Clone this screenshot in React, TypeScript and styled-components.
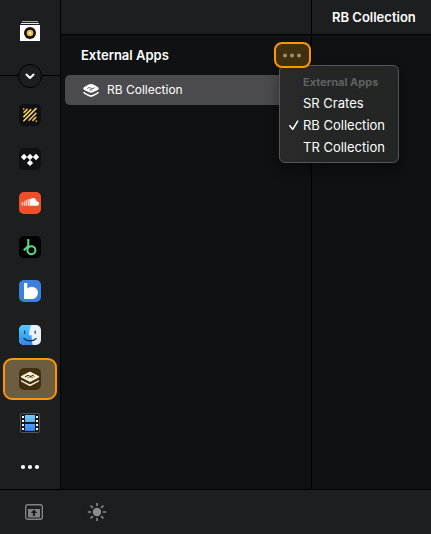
import React, { useState } from "react";
import styled, { createGlobalStyle, css } from "styled-components";

const GlobalStyle = createGlobalStyle`
  *, *::before, *::after { box-sizing: border-box; }
  body {
    margin: 0;
    background: #101113;
    color: #fff;
    font-family: Inter, "Liberation Sans", sans-serif;
    font-size: 13px;
    line-height: 16px;
    overflow: hidden;
  }
  button { font: inherit; color: inherit; border: 0; margin: 0; padding: 0; background: none; cursor: pointer; }
  svg { display: block; flex: none; }
  h1, h2, ul { margin: 0; padding: 0; font: inherit; list-style: none; }
`;

const Shell = styled.div`
  display: flex;
  flex-direction: column;
  min-height: 100vh;
`;

const Workspace = styled.div`
  display: flex;
  flex: 1;
`;

const Sidebar = styled.nav`
  display: flex;
  flex-direction: column;
  flex: none;
  width: 61px;
  background: #1d1e20;
  border-right: 1px solid #000;
`;

const LibrarySection = styled.div`
  position: relative;
  display: flex;
  justify-content: center;
  height: 76px;
  padding-top: 20px;
  border-bottom: 1px solid #000;
`;

const LibraryButton = styled.button`
  width: 22px;
  height: 22px;
`;

const CollapseButton = styled.button`
  position: absolute;
  left: 50%;
  bottom: -13px;
  display: grid;
  place-items: center;
  width: 24px;
  height: 24px;
  border: 1px solid #000;
  border-radius: 50%;
  background: #1d1e20;
  transform: translateX(-50%);
`;

const SourceList = styled.ul`
  display: flex;
  flex-direction: column;
  padding: 18px 3px 0;
  gap: 2px;
`;

const SourceButton = styled.button<{ $active?: boolean }>`
  display: grid;
  place-items: center;
  width: 100%;
  height: 42px;
  border-radius: 9px;
  ${({ $active }) =>
    $active &&
    css`
      border: 2px solid #ff9500;
      background: #6c5d40;
    `}
`;

const Browser = styled.section`
  display: flex;
  flex-direction: column;
  flex: none;
  width: 251px;
  border-right: 1px solid #000;
`;

const Content = styled.main`
  flex: 1;
  min-width: 0;
`;

const TitleBar = styled.header`
  display: flex;
  align-items: center;
  height: 35px;
  padding: 0 20px;
  background: #1d1e20;
  border-bottom: 1px solid #000;
`;

const Title = styled.h1`
  font-weight: 600;
  white-space: nowrap;
`;

const BrowserHeader = styled.div`
  display: flex;
  align-items: center;
  justify-content: space-between;
  height: 40px;
  padding-left: 20px;
`;

const BrowserTitle = styled.h2`
  font-weight: 600;
`;

const MenuAnchor = styled.div`
  position: relative;
`;

const MoreButton = styled.button`
  position: relative;
  z-index: 2;
  display: grid;
  place-items: center;
  width: 37px;
  height: 26px;
  border: 2px solid #ff9500;
  border-radius: 8px;
  background: #40300f;
`;

const Menu = styled.div`
  position: absolute;
  z-index: 1;
  top: 23px;
  left: 5px;
  width: 120px;
  padding: 6px 4px 4px;
  border: 1px solid #555657;
  border-radius: 6px;
  background: linear-gradient(90deg, #2a2a2a, #242625 40%);
  box-shadow: 0 6px 14px rgba(0, 0, 0, 0.4);
`;

const MenuHeading = styled.div`
  padding: 2px 0 2px 19px;
  height: 20px;
  color: #606161;
  font-size: 11px;
  font-weight: 700;
`;

const MenuItem = styled.button`
  display: grid;
  grid-template-columns: 19px 1fr;
  align-items: center;
  width: 100%;
  height: 22px;
  text-align: left;
  white-space: nowrap;
`;

const MenuLabel = styled.span`
  grid-column: 2;
`;

const CheckSlot = styled.span`
  padding-left: 4px;
`;

const CollectionRow = styled.button`
  display: flex;
  align-items: center;
  gap: 8px;
  height: 30px;
  margin: 0 4px;
  padding: 0 18px;
  border-radius: 5px;
  background: #4b4b4d;
  font-size: 12px;
`;

const Footer = styled.footer`
  display: flex;
  align-items: center;
  gap: 43px;
  height: 45px;
  padding: 0 24px;
  background: #1d1e20;
  border-top: 1px solid #000;
`;

const ToolButton = styled.button`
  width: 20px;
  height: 20px;
`;

const Icon = ({ size = 22, children }: { size?: number; children: React.ReactNode }) => (
  <svg width={size} height={size} viewBox={`0 0 ${size} ${size}`} fill="none" aria-hidden="true">
    {children}
  </svg>
);

const RecordIcon = () => (
  <Icon>
    <path d="M3 1.5h16" stroke="#a9aaab" />
    <path d="M2 3.5h18" stroke="#e8e8e8" />
    <path d="M1 5h20v16H1z" fill="#fff" />
    <circle cx="11" cy="13" r="6" fill="#111214" />
    <circle cx="11" cy="13" r="3.3" fill="#f6b73c" />
    <circle cx="11" cy="13" r="1.3" fill="#fff0c4" />
  </Icon>
);

const BeatsourceIcon = () => (
  <Icon>
    <defs>
      <linearGradient id="gold" x1="4" y1="4" x2="18" y2="18" gradientUnits="userSpaceOnUse">
        <stop stopColor="#ffbf32" />
        <stop offset="0.5" stopColor="#ffd877" />
        <stop offset="1" stopColor="#f5ae27" />
      </linearGradient>
    </defs>
    <rect width="22" height="22" rx="5" fill="#101112" />
    <g stroke="url(#gold)" strokeWidth="1.5" strokeLinecap="round">
      <path d="M4.6 4.9l.2-.2M5 8.4l3-3M4.8 12.6l7-7M4.8 16.8L17 4.6M10 16.2l7-7M13.8 16.4l3-3M17.2 17.3l.2-.2" />
    </g>
  </Icon>
);

const TidalIcon = () => (
  <Icon>
    <rect width="22" height="22" rx="5" fill="#101112" />
    <path
      d="M5 5.7L8.1 9 5 12.2 1.9 9zM11 5.7L14.1 9 11 12.2 7.9 9zM17 5.7L20.1 9 17 12.2 13.9 9zM11 11.7l3.1 3.2-3.1 3.2-3.1-3.2z"
      fill="#fff"
    />
  </Icon>
);

const SoundCloudIcon = () => (
  <Icon>
    <rect width="22" height="22" rx="5" fill="#ee512a" />
    <path d="M12 6.4c3-1.3 5.4.6 5.7 3.1 1.5-.3 2.5.8 2.5 2.1 0 1.2-.9 2.1-2 2.1H12z" fill="#fff" />
    <path d="M10.3 7h1.7v6.7h-1.7z" fill="#ffe3d8" />
    <path d="M8.5 6.9l1.8.7v6.1H8.5z" fill="#fbc8b6" />
    <path d="M6.6 8.2l1.3-.4v5.9H6.6z" fill="#ffe1d6" />
    <path d="M4.7 9.8l1.3-.5v4.4H4.7zM2.8 10.4l1.2-.5v3.7H2.8z" fill="#fccbb9" />
    <path d="M2.1 10.8v2.3" stroke="#f8a88f" strokeWidth=".6" />
  </Icon>
);

const BeatportIcon = () => (
  <Icon>
    <rect width="22" height="22" rx="5" fill="#000" />
    <circle cx="12.4" cy="14.3" r="4" stroke="#57df83" strokeWidth="2" />
    <path d="M9.3 3v5.5c0 1.4-.4 2-1.2 2.8l-3.3 3" stroke="#57df83" strokeWidth="2" />
  </Icon>
);

const BeatsourceLetterIcon = () => (
  <Icon>
    <rect width="22" height="22" rx="5" fill="#3b80dc" />
    <path d="M5 3h3.3v16H5z" fill="#fff" />
    <circle cx="12.7" cy="13" r="6.2" fill="#fff" />
    <path d="M5 15h5v4H5z" fill="#fff" />
  </Icon>
);

const FinderIcon = () => (
  <Icon>
    <defs>
      <linearGradient id="face" x1="6" y1="1" x2="6" y2="21" gradientUnits="userSpaceOnUse">
        <stop stopColor="#52cdfd" />
        <stop offset="1" stopColor="#2d87f3" />
      </linearGradient>
      <clipPath id="faceClip">
        <rect y="1" width="22" height="20" rx="5" />
      </clipPath>
    </defs>
    <g clipPath="url(#faceClip)">
      <path d="M0 1h22v20H0z" fill="#eaf0f8" />
      <path d="M0 1h12.2c-1.4 3.4-2 6.5-2.2 10.2h2.7c-.1 3.6.2 6.6 1 9.8H0z" fill="url(#face)" />
    </g>
    <path d="M5.7 7v2.2M16.2 7v2.2" stroke="#172536" strokeWidth="1.1" strokeLinecap="round" />
    <path d="M4.8 14.5c3.6 3.2 8.9 3.2 12.4 0" stroke="#172536" strokeWidth="1.1" strokeLinecap="round" />
  </Icon>
);

const CollectionIcon = () => (
  <Icon>
    <rect width="22" height="22" rx="5" fill="#40300f" />
    <path d="M10 3.9q1-.5 2 0l7.6 4q1.3.8 0 1.6l-7.6 4q-1 .5-2 0l-7.6-4q-1.3-.8 0-1.6z" fill="#fff3d7" />
    <path d="M2 11.9l8 4q1 .5 2 0l8-4q.5 1.2-.6 1.9l-7.4 4q-1 .5-2 0l-7.4-4Q1.500 13.100 2 11.900z" fill="#fff3d7" />
    <path d="M6 8.900l2-1.100q1.200-.6 2.300.1 1.200.8 2.400.2l2-1" stroke="#40300f" strokeWidth="1.100" />
    <path d="M8.300 10.200l1.500-.8q1-.4 2 .1 1.100.6 2.100 0l2-1.100" stroke="#40300f" strokeWidth=".6" />
  </Icon>
);

const FilmIcon = () => (
  <Icon>
    <defs>
      <linearGradient id="film" x1="11" y1="2" x2="11" y2="20" gradientUnits="userSpaceOnUse">
        <stop stopColor="#75d4fb" />
        <stop offset="1" stopColor="#3079ed" />
      </linearGradient>
    </defs>
    <rect x="1.5" y="1.5" width="19" height="19" rx="1.5" fill="#161719" stroke="#505254" />
    <path d="M6 3h10v7H6zM6 12h10v7H6z" fill="url(#film)" />
    <path
      d="M3 4h2v2H3zm0 4h2v2H3zm0 4h2v2H3zm0 4h2v2H3zM17 4h2v2h-2zm0 4h2v2h-2zm0 4h2v2h-2zm0 4h2v2h-2z"
      fill="#fff"
    />
  </Icon>
);

const MoreIcon = () => (
  <Icon>
    <g fill="#fff">
      <circle cx="4" cy="11" r="2.1" />
      <circle cx="11" cy="11" r="2.1" />
      <circle cx="18" cy="11" r="2.1" />
    </g>
  </Icon>
);

const StackIcon = () => (
  <Icon size={16}>
    <path d="M8 2c1 0 1.800.3 2.500.6l4.200 2.300c1.400.9 1.400 2.200 0 3l-4.200 2.200c-1.600.8-3.400.8-5 0L1.300 7.900c-1.400-.8-1.400-2.100 0-3l4.200-2.300C6.200 2.300 7 2 8 2z" fill="#fff" />
    <path d="M.8 10c.3 1 .8 1.300 1.500 1.600l3.700 1.900c1.300.7 2.700.7 4 0l3.700-1.900c.7-.3 1.200-.6 1.500-1.600" stroke="#fff" strokeWidth="1.500" />
    <path d="M4.200 6.600c1.200-1.100 2.300-1.200 3.500-.5 1.500.8 2.700.6 4-.5M6.500 8c1.300-.3 2.100-.1 3 .1" stroke="#4b4b4d" strokeWidth=".9" />
  </Icon>
);

const DotsIcon = () => (
  <Icon size={21}>
    <g fill="#a0916b">
      <circle cx="3" cy="10.500" r="2" />
      <circle cx="10" cy="10.500" r="2" />
      <circle cx="17" cy="10.500" r="2" />
    </g>
  </Icon>
);

const ChevronIcon = () => (
  <Icon size={12}>
    <path d="M2.4 4.6L6 8l3.6-3.4" stroke="#fff" strokeWidth="2" strokeLinecap="round" strokeLinejoin="round" />
  </Icon>
);

const CheckIcon = () => (
  <Icon size={12}>
    <path d="M1.8 6.7l2.9 3.6 5-8.2" stroke="#fff" strokeWidth="1.5" strokeLinecap="round" strokeLinejoin="round" />
  </Icon>
);

const WindowIcon = () => (
  <Icon size={20}>
    <rect x="1.7" y="2.7" width="16.6" height="14.6" rx="2" stroke="#818284" strokeWidth="1.4" />
    <path d="M4 7h12v8.5H4z" fill="#818284" />
    <path d="M10 7.500l3.300 3.500h-2.200v3H8.900v-3H6.700z" fill="#1d1e20" />
  </Icon>
);

const SunIcon = () => (
  <Icon size={20}>
    <circle cx="10" cy="10" r="4.2" fill="#8b8c8e" />
    <path
      d="M10 1.500v2M10 16.500v2M1.500 10h2M16.500 10h2M4 4l1.400 1.400M14.600 14.600L16 16M16 4l-1.400 1.400M5.400 14.600L4 16"
      stroke="#8b8c8e"
      strokeWidth="1.6"
      strokeLinecap="round"
    />
  </Icon>
);

const sources = [
  { name: "Beatsource", icon: <BeatsourceIcon /> },
  { name: "Tidal", icon: <TidalIcon /> },
  { name: "SoundCloud", icon: <SoundCloudIcon /> },
  { name: "Beatport", icon: <BeatportIcon /> },
  { name: "Streaming", icon: <BeatsourceLetterIcon /> },
  { name: "Finder", icon: <FinderIcon /> },
  { name: "External Apps", icon: <CollectionIcon /> },
  { name: "Video", icon: <FilmIcon /> },
  { name: "More sources", icon: <MoreIcon /> },
];

const collections = ["SR Crates", "RB Collection", "TR Collection"];

export default function App() {
  const [source, setSource] = useState("External Apps");
  const [collection, setCollection] = useState("RB Collection");

  return (
    <>
      <GlobalStyle />
      <Shell>
        <Workspace>
          <Sidebar aria-label="Sources">
            <LibrarySection>
              <LibraryButton type="button" aria-label="Library">
                <RecordIcon />
              </LibraryButton>
              <CollapseButton type="button" aria-label="Expand">
                <ChevronIcon />
              </CollapseButton>
            </LibrarySection>
            <SourceList>
              {sources.map(({ name, icon }) => (
                <li key={name}>
                  <SourceButton
                    type="button"
                    aria-label={name}
                    aria-pressed={source === name}
                    $active={source === name}
                    onClick={() => setSource(name)}
                  >
                    {icon}
                  </SourceButton>
                </li>
              ))}
            </SourceList>
          </Sidebar>
          <Browser>
            <TitleBar />
            <BrowserHeader>
              <BrowserTitle>External Apps</BrowserTitle>
              <MenuAnchor>
                <MoreButton type="button" aria-label="Choose app" aria-haspopup="menu" aria-expanded="true">
                  <DotsIcon />
                </MoreButton>
                <Menu role="menu">
                  <MenuHeading>External Apps</MenuHeading>
                  {collections.map((name) => (
                    <MenuItem
                      key={name}
                      type="button"
                      role="menuitemradio"
                      aria-checked={collection === name}
                      onClick={() => setCollection(name)}
                    >
                      {collection === name && (
                        <CheckSlot>
                          <CheckIcon />
                        </CheckSlot>
                      )}
                      <MenuLabel>{name}</MenuLabel>
                    </MenuItem>
                  ))}
                </Menu>
              </MenuAnchor>
            </BrowserHeader>
            <CollectionRow type="button">
              <StackIcon />
              {collection}
            </CollectionRow>
          </Browser>
          <Content>
            <TitleBar>
              <Title>{collection}</Title>
            </TitleBar>
          </Content>
        </Workspace>
        <Footer>
          <ToolButton type="button" aria-label="Open panel">
            <WindowIcon />
          </ToolButton>
          <ToolButton type="button" aria-label="Brightness">
            <SunIcon />
          </ToolButton>
        </Footer>
      </Shell>
    </>
  );
}
